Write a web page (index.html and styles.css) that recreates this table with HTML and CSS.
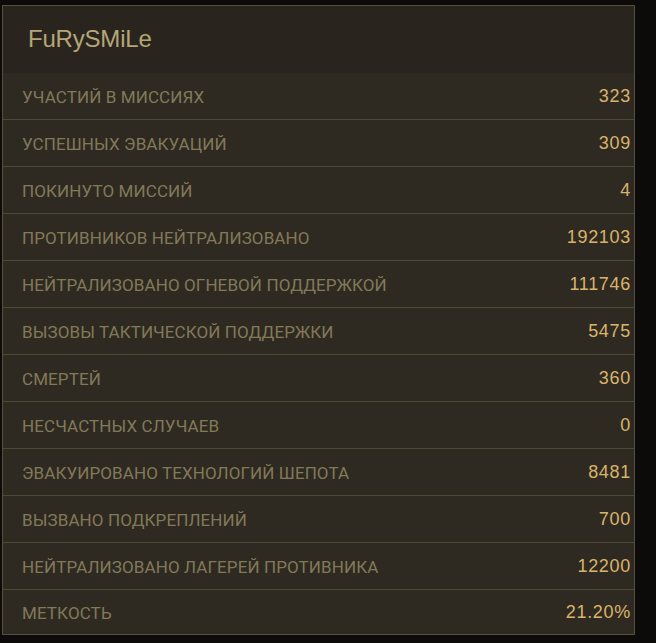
FILE: index.html
```html
<!DOCTYPE html>
<html lang="ru">
<head>
<meta charset="utf-8">
<link rel="stylesheet" href="styles.css">
</head>
<body>
<div class="panel">
  <div class="header">FuRySMiLe</div>
  <div class="row"><span class="label">Участий в миссиях</span><span class="value">323</span></div>
  <div class="row"><span class="label">Успешных эвакуаций</span><span class="value">309</span></div>
  <div class="row"><span class="label">Покинуто миссий</span><span class="value">4</span></div>
  <div class="row"><span class="label">Противников нейтрализовано</span><span class="value">192103</span></div>
  <div class="row"><span class="label">Нейтрализовано огневой поддержкой</span><span class="value">111746</span></div>
  <div class="row"><span class="label">Вызовы тактической поддержки</span><span class="value">5475</span></div>
  <div class="row"><span class="label">Смертей</span><span class="value">360</span></div>
  <div class="row"><span class="label">Несчастных случаев</span><span class="value">0</span></div>
  <div class="row"><span class="label">Эвакуировано технологий шепота</span><span class="value">8481</span></div>
  <div class="row"><span class="label">Вызвано подкреплений</span><span class="value">700</span></div>
  <div class="row"><span class="label">Нейтрализовано лагерей противника</span><span class="value">12200</span></div>
  <div class="row last"><span class="label">Меткость</span><span class="value">21.20%</span></div>
</div>
</body>
</html>
```
FILE: styles.css
```css
html, body {
  margin: 0;
  padding: 0;
  background: #0c0b09;
  font-family: "Liberation Sans", Arial, sans-serif;
}
.panel {
  margin: 5px 0 0 2px;
  width: 631px;
  border: 1px solid #57503a;
  background: #2e2a21;
  display: flex;
  flex-direction: column;
}
.header {
  height: 66px;
  background: #29251e;
  color: #b6a677;
  font-size: 24px;
  display: flex;
  align-items: center;
  padding-left: 25px;
  padding-bottom: 1px;
  letter-spacing: -0.2px;
}
.row {
  height: 45px;
  padding: 1px 3px 0 19px;
  border-top: 1px solid #4f4834;
  display: flex;
  align-items: center;
  justify-content: space-between;
}
.header + .row {
  border-top: none;
}
.row.last {
  height: 43px;
}
.label {
  font-family: Roboto, "Liberation Sans", sans-serif;
  font-size: 17px;
  letter-spacing: 0.1px;
  text-transform: uppercase;
  color: #837959;
}
.value {
  font-family: "Liberation Sans", Arial, sans-serif;
  color: #dab36b;
  font-size: 18px;
  letter-spacing: 0.7px;
}
```
